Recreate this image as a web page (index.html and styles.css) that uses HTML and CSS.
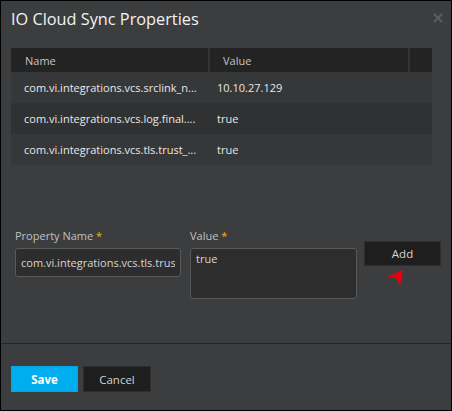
FILE: index.html
```html
<!DOCTYPE html>
<html lang="en">
<head>
  <meta charset="UTF-8" />
  <title>IO Cloud Sync Properties</title>
  <link rel="stylesheet" href="styles.css">
</head>
<body>
  <div class="dialog">
    <div class="dialog-body">
      <div class="dialog-header">
        <h1 class="dialog-title">IO Cloud Sync Properties</h1>
        <button class="close-btn" aria-label="Close">
          <svg width="10" height="10" viewBox="0 0 10 10">
            <path d="M1 1 L9 9 M9 1 L1 9" stroke="#5c5d5f" stroke-width="2" />
          </svg>
        </button>
      </div>

      <div class="props-table">
        <div class="props-row props-head">
          <div class="cell">Name</div>
          <div class="cell">Value</div>
          <div class="cell"></div>
        </div>
        <div class="props-row">
          <div class="cell">com.vi.integrations.vcs.srclink_n...</div>
          <div class="cell">10.10.27.129</div>
        </div>
        <div class="props-row alt">
          <div class="cell">com.vi.integrations.vcs.log.final....</div>
          <div class="cell">true</div>
        </div>
        <div class="props-row">
          <div class="cell">com.vi.integrations.vcs.tls.trust_...</div>
          <div class="cell">true</div>
        </div>
      </div>

      <div class="add-form">
        <div class="field field-name">
          <label>Property Name <span class="req">*</span></label>
          <input type="text" value="com.vi.integrations.vcs.tls.trust_all" />
        </div>
        <div class="field field-value">
          <label>Value <span class="req">*</span></label>
          <textarea>true</textarea>
        </div>
        <button class="btn btn-dark btn-add">Add</button>
      </div>

      <svg class="cursor" width="18" height="18" viewBox="0 0 18 18">
        <polygon points="17,1 1,8 10,9 14,17" fill="#e8000f" />
      </svg>
    </div>

    <div class="dialog-footer">
      <button class="btn btn-primary">Save</button>
      <button class="btn btn-dark">Cancel</button>
    </div>
  </div>
</body>
</html>
```

FILE: styles.css
```css
* {
  box-sizing: border-box;
  margin: 0;
  padding: 0;
}

html, body {
  width: 452px;
  height: 411px;
  background-color: #000;
  font-family: 'Open Sans', 'Noto Sans', sans-serif;
  overflow: hidden;
}

.dialog {
  width: 452px;
  height: 411px;
  border: 1px solid #000;
  background-color: #3c3d3f;
  display: flex;
  flex-direction: column;
}

.dialog-body {
  flex: 1;
  position: relative;
}

/* Header */
.dialog-header {
  display: flex;
  justify-content: space-between;
  align-items: flex-start;
  padding: 6px 8px 0 10px;
}

.dialog-title {
  font-size: 16.3px;
  font-weight: normal;
  line-height: 24px;
  color: #f2f2f2;
}

.close-btn {
  background: none;
  border: none;
  margin-top: 4px;
  cursor: pointer;
}

/* Table */
.props-table {
  margin: 17px 19px 0 10px;
}

.props-row {
  display: grid;
  grid-template-columns: 197px 1fr 24px;
  height: 31px;
  align-items: center;
  background-color: #363739;
  color: #e8e8e8;
  font-size: 11px;
}

.props-row.alt {
  background-color: #303133;
}

.props-row .cell {
  padding-left: 13px;
  white-space: nowrap;
  overflow: hidden;
  text-overflow: ellipsis;
}

.props-row .cell:nth-child(2) {
  padding-left: 9px;
}

.props-head {
  height: 24px;
  background-color: #232323;
  color: #c4c4c4;
  align-items: stretch;
}

.props-head .cell {
  display: flex;
  align-items: center;
  padding-left: 14px;
}

.props-head .cell:nth-child(2),
.props-head .cell:nth-child(3) {
  border-left: 2px solid #343434;
  padding-left: 13px;
}

/* Add form */
.add-form {
  display: flex;
  align-items: flex-start;
  margin: 62px 0 0 14px;
}

.field label {
  display: block;
  font-size: 11px;
  line-height: 18px;
  color: #c0c0c0;
  margin-bottom: 3px;
}

.req {
  color: #f0b323;
}

.field input,
.field textarea {
  display: block;
  background-color: #2d2d2e;
  border: 1px solid #58595b;
  border-radius: 3px;
  color: #d6d6d6;
  font-family: inherit;
  font-size: 11px;
  padding: 0 5px;
  outline: none;
}

.field-name input {
  width: 166px;
  height: 29px;
}

.field-value {
  margin-left: 9px;
}

.field-value textarea {
  width: 167px;
  height: 51px;
  resize: none;
  padding-top: 1px;
  line-height: 18px;
}

.btn-add {
  margin: 14px 0 0 7px;
  width: 77px;
  height: 25px;
}

.cursor {
  position: absolute;
  left: 385px;
  top: 268px;
}

/* Buttons */
.btn {
  font-family: inherit;
  font-size: 11.5px;
  cursor: pointer;
}

.btn-dark {
  background-color: #1e1e1f;
  border: 1px solid #2e2e2f;
  color: #d4d4d4;
}

.btn-primary {
  background-color: #00aeef;
  border: 1px solid #00a5e3;
  color: #fff;
  font-weight: bold;
}

/* Footer */
.dialog-footer {
  height: 67px;
  border-top: 1px solid #252526;
  display: flex;
  gap: 5px;
  padding: 22px 0 0 10px;
}

.dialog-footer .btn {
  height: 26px;
}

.dialog-footer .btn-primary {
  width: 67px;
}

.dialog-footer .btn-dark {
  width: 68px;
}
```
